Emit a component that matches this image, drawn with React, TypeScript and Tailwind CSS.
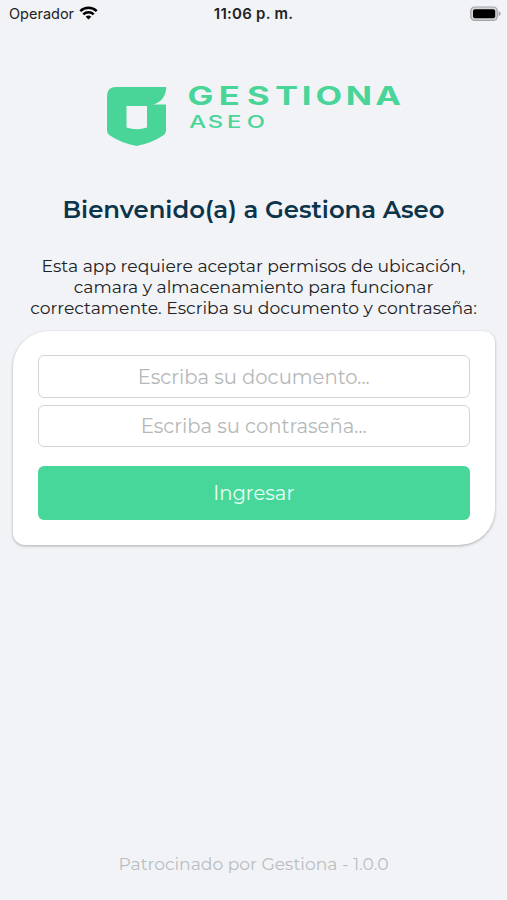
import { useState } from "react";

const INTRO = [
  "Esta app requiere aceptar permisos de ubicación,",
  "camara y almacenamiento para funcionar",
  "correctamente. Escriba su documento y contraseña:",
];

function StatusBar() {
  return (
    <header className="grid h-7 grid-cols-3 items-center pr-[6px] pl-[9px] font-[Inter,sans-serif] text-[14.5px] text-[#222]">
      <div className="flex items-center gap-[5px]">
        <span>Operador</span>
        <svg className="-mt-[2px]" width="19" height="14" viewBox="0 0 19 14" fill="none" stroke="#000" strokeWidth="2.5">
          <path d="M1.3 5.1a11.7 11.7 0 0 1 16.4 0" />
          <path d="M4.3 8.3a7.4 7.4 0 0 1 10.4 0" />
          <path d="M9.5 13.6 6.7 10.8a4 4 0 0 1 5.6 0Z" fill="#000" stroke="none" />
        </svg>
      </div>
      <span className="pr-[3px] text-center text-[15px] font-semibold tracking-[0.25px] whitespace-nowrap">11:06 p. m.</span>
      <svg className="-mt-px justify-self-end" width="31" height="16" viewBox="0 0 31 16">
        <rect x="0.8" y="1" width="26.5" height="13.4" rx="4" fill="#d5d6d8" stroke="#a3a4a7" strokeWidth="1.2" />
        <rect x="3" y="3.2" width="22.2" height="9" rx="2" fill="#000" />
        <path d="M28.6 5.3c2.7 1 2.7 3.8 0 4.8Z" fill="#a3a4a7" />
      </svg>
    </header>
  );
}

function Logo() {
  return (
    <div className="mt-[51px] flex gap-[20px] pl-[107px]">
      <svg className="mt-2" width="60" height="60" viewBox="0 0 60 60" fill="#48d597">
        <path
          fillRule="evenodd"
          d="M9 0H59.3C59 8 55 15.5 46 17.5H59V43Q59 46.5 56 48.5Q44 56.5 29.5 59Q14 56 3 48.5Q0 46.5 0 43V9Q0 0 9 0ZM19.5 19V40.5Q29.5 44 40 40.5V19Z"
        />
      </svg>
      {/* extended wordmark: wide glyphs, each letter spaced by hand */}
      <svg width="220" height="60" viewBox="0 0 220 60" fill="#48d597" fontFamily="Inter, sans-serif">
        <text
          transform="scale(1.38 1)"
          x="0.3 23 43.4 63.7 83.2 93.1 115.1 136.5"
          y="26"
          fontSize="25"
          fontWeight="700"
        >
          GESTIONA
        </text>
        <text transform="scale(1.4 1)" x="1.7 14.9 28.6 42.6" y="49.5" fontSize="17" fontWeight="500">
          ASEO
        </text>
      </svg>
    </div>
  );
}

export default function App() {
  const [documento, setDocumento] = useState("");
  const [password, setPassword] = useState("");

  return (
    <main className="flex h-[900px] w-[507px] flex-col overflow-hidden bg-[#f1f3f7] font-[Montserrat,Inter,sans-serif]">
      <StatusBar />
      <Logo />

      <h1 className="mt-[46px] text-center text-[24.4px] leading-8 font-semibold whitespace-nowrap text-[#0c344b]">
        Bienvenido(a) a Gestiona Aseo
      </h1>

      <p className="mt-[30px] text-center text-[17.2px] leading-[21px] whitespace-nowrap text-[#222]">
        {INTRO.map((line) => (
          <span key={line} className="block">
            {line}
          </span>
        ))}
      </p>

      <form
        onSubmit={(e) => e.preventDefault()}
        className="mx-3 mt-[13px] ml-[13px] flex h-[214px] flex-col rounded-tl-[36px] rounded-tr-[12px] rounded-br-[36px] rounded-bl-[12px] bg-white px-[25px] pt-[24px] pl-[24.5px] shadow-[0_1px_3px_rgba(0,0,0,0.3)]"
      >
        <input
          value={documento}
          onChange={(e) => setDocumento(e.target.value)}
          placeholder="Escriba su documento..."
          className="h-[43px] rounded-[6px] border border-[#d3d4d5] text-center text-[19.6px] outline-none placeholder:text-[#b5b8b9]"
        />
        <input
          type="password"
          value={password}
          onChange={(e) => setPassword(e.target.value)}
          placeholder="Escriba su contraseña..."
          className="mt-[7px] h-[42px] rounded-[6px] border border-[#d3d4d5] text-center text-[19.6px] outline-none placeholder:text-[#b5b8b9]"
        />
        <button type="submit" className="mt-[19px] h-[54px] rounded-[6px] bg-[#48d79a] pt-[2px] text-[19.6px] text-[#e6fff3]">
          Ingresar
        </button>
      </form>

      <footer className="mt-auto pb-[24px] text-center text-[17.15px] leading-6 text-[#b9bdc0]">
        Patrocinado por Gestiona - 1.0.0
      </footer>
    </main>
  );
}
